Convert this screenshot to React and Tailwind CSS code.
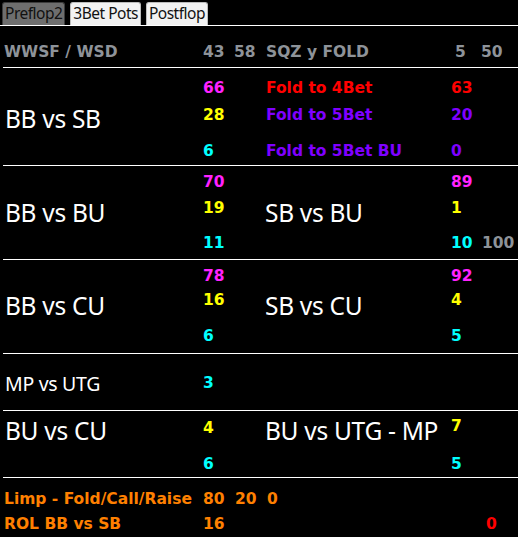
import React from 'react'

const bold = { fontFamily: '"DejaVu Sans", Verdana, sans-serif' }
const big = { fontFamily: '"Noto Sans", "Open Sans", sans-serif' }

const tabs = ['Preflop2', '3Bet Pots', 'Postflop']

function Num({ v, c }) {
  return <span className={`font-bold text-[15.5px] leading-none ${c}`} style={bold}>{v}</span>
}

function Rule() {
  return <div className="ml-[3px] h-px bg-white" />
}

// one matchup block: big label + three stacked stats
function Block({ rows, lastPt, labelPt, left, right }) {
  return (
    <div className="grid grid-cols-[200px_65px_186px_30px_1fr]" style={{ gridTemplateRows: rows }}>
      <div className="row-span-4 flex items-center pl-[5px] text-white text-[24.5px] tracking-[-0.3px]" style={{ ...big, paddingTop: labelPt }}>{left.label}</div>
      <div className="row-start-2 col-start-2 flex items-center pl-[3px]"><Num v={left.v[0]} c="text-[#ff22ff]" /></div>
      <div className="row-start-3 col-start-2 flex items-center pl-[3px]"><Num v={left.v[1]} c="text-[#ffff00]" /></div>
      <div className="row-start-4 col-start-2 flex items-center pl-[3px]" style={{ paddingTop: lastPt }}><Num v={left.v[2]} c="text-[#00ffff]" /></div>
      {right && (
        <>
          <div className="row-span-4 col-start-3 row-start-1 flex items-center text-white text-[24.5px] tracking-[-0.3px]" style={{ ...big, paddingTop: labelPt }}>{right.label}</div>
          <div className="row-start-2 col-start-4 flex items-center"><Num v={right.v[0]} c="text-[#ff22ff]" /></div>
          <div className="row-start-3 col-start-4 flex items-center"><Num v={right.v[1]} c="text-[#ffff00]" /></div>
          <div className="row-start-4 col-start-4 flex items-center" style={{ paddingTop: lastPt }}><Num v={right.v[2]} c="text-[#00ffff]" /></div>
          {right.extra && (
            <div className="row-start-4 col-start-5 flex items-center pl-[1px]" style={{ paddingTop: lastPt }}><Num v={right.extra} c="text-[#8e9399]" /></div>
          )}
        </>
      )}
    </div>
  )
}

export default function App() {
  return (
    <div className="w-[518px] h-[537px] bg-black overflow-hidden">
      <div className="flex items-end gap-[5px] pl-[2px] pt-[2px] border-b border-white">
        {tabs.map((t, i) => (
          <div
            key={t}
            className={`h-[23px] px-[2px] flex items-center rounded-t-[3px] border border-b-0 text-[15.5px] tracking-[-0.5px] ${i === 0 ? 'bg-[#6e6e6e] border-[#3c3c3c] text-[#111]' : 'bg-[#f2f2f2] border-[#bcbcbc] text-[#111]'}`}
            style={big}
          >
            {t}
          </div>
        ))}
      </div>

      <div className="grid grid-cols-[200px_34px_32px_186px_29px_1fr] h-[41px] items-center pt-[12px] font-bold text-[15.5px] text-[#8e9399]" style={bold}>
        <span className="pl-[4px]">WWSF / WSD</span>
        <span className="pl-[3px]">43</span>
        <span>58</span>
        <span>SQZ y FOLD</span>
        <span className="pl-[3px]">5</span>
        <span>50</span>
      </div>
      <Rule />

      {/* BB vs SB with the fold stats on the right */}
      <div className="grid grid-cols-[200px_65px_186px_30px_1fr] grid-rows-[7px_27px_27px_36px]">
        <div className="row-span-4 flex items-center pl-[5px] pt-[5px] text-white text-[24.5px] tracking-[-0.3px]" style={big}>BB vs SB</div>
        <div className="row-start-2 col-start-2 flex items-center pl-[3px]"><Num v="66" c="text-[#ff22ff]" /></div>
        <div className="row-start-3 col-start-2 flex items-center pl-[3px]"><Num v="28" c="text-[#ffff00]" /></div>
        <div className="row-start-4 col-start-2 flex items-center pl-[3px] pt-[10px]"><Num v="6" c="text-[#00ffff]" /></div>
        <div className="row-start-2 col-start-3 flex items-center pl-[1px]"><Num v="Fold to 4Bet" c="text-[#ff0000]" /></div>
        <div className="row-start-3 col-start-3 flex items-center pl-[1px]"><Num v="Fold to 5Bet" c="text-[#7f00ff]" /></div>
        <div className="row-start-4 col-start-3 flex items-center pl-[1px] pt-[10px]"><Num v="Fold to 5Bet BU" c="text-[#7f00ff]" /></div>
        <div className="row-start-2 col-start-4 flex items-center"><Num v="63" c="text-[#ff0000]" /></div>
        <div className="row-start-3 col-start-4 flex items-center"><Num v="20" c="text-[#7f00ff]" /></div>
        <div className="row-start-4 col-start-4 flex items-center pt-[10px]"><Num v="0" c="text-[#7f00ff]" /></div>
      </div>
      <Rule />

      <Block rows="4px 26px 26px 37px" lastPt="7px" labelPt="2px" left={{ label: 'BB vs BU', v: ['70', '19', '11'] }} right={{ label: 'SB vs BU', v: ['89', '1', '10'], extra: '100' }} />
      <Rule />
      <Block rows="5px 24px 24px 40px" lastPt="8px" labelPt="0px" left={{ label: 'BB vs CU', v: ['78', '16', '6'] }} right={{ label: 'SB vs CU', v: ['92', '4', '5'] }} />
      <Rule />

      <div className="grid grid-cols-[200px_1fr] h-[56px] items-center pt-[4px]">
        <span className="pl-[5px] text-white text-[19.5px] tracking-[-0.3px]" style={big}>MP vs UTG</span>
        <span className="pl-[3px] -mt-[4px]"><Num v="3" c="text-[#00ffff]" /></span>
      </div>
      <Rule />

      <div className="grid grid-cols-[200px_65px_186px_1fr] grid-rows-[34px_32px]">
        <div className="pl-[5px] pt-[2px] text-white text-[24.5px] tracking-[-0.3px]" style={big}>BU vs CU</div>
        <div className="pl-[3px] pt-[4px]"><Num v="4" c="text-[#ffff00]" /></div>
        <div className="pt-[2px] text-white text-[24.5px] tracking-[-0.3px]" style={big}>BU vs UTG - MP</div>
        <div className="pt-[2px]"><Num v="7" c="text-[#ffff00]" /></div>
        <div className="col-start-2 pl-[3px] pt-[6px]"><Num v="6" c="text-[#00ffff]" /></div>
        <div className="col-start-4 pt-[6px]"><Num v="5" c="text-[#00ffff]" /></div>
      </div>
      <Rule />

      <div className="pt-[9px] font-bold text-[15.5px] text-[#ff8000]" style={bold}>
        <div className="grid grid-cols-[200px_35px_32px_1fr] h-[25px] items-center">
          <span className="pl-[4px] whitespace-nowrap">Limp - Fold/Call/Raise</span>
          <span className="pl-[3px]">80</span>
          <span>20</span>
          <span>0</span>
        </div>
        <div className="grid grid-cols-[200px_286px_1fr] h-[25px] items-center">
          <span className="pl-[4px]">ROL BB vs SB</span>
          <span className="pl-[3px]">16</span>
          <span className="text-[#ff0000]">0</span>
        </div>
      </div>
    </div>
  )
}
